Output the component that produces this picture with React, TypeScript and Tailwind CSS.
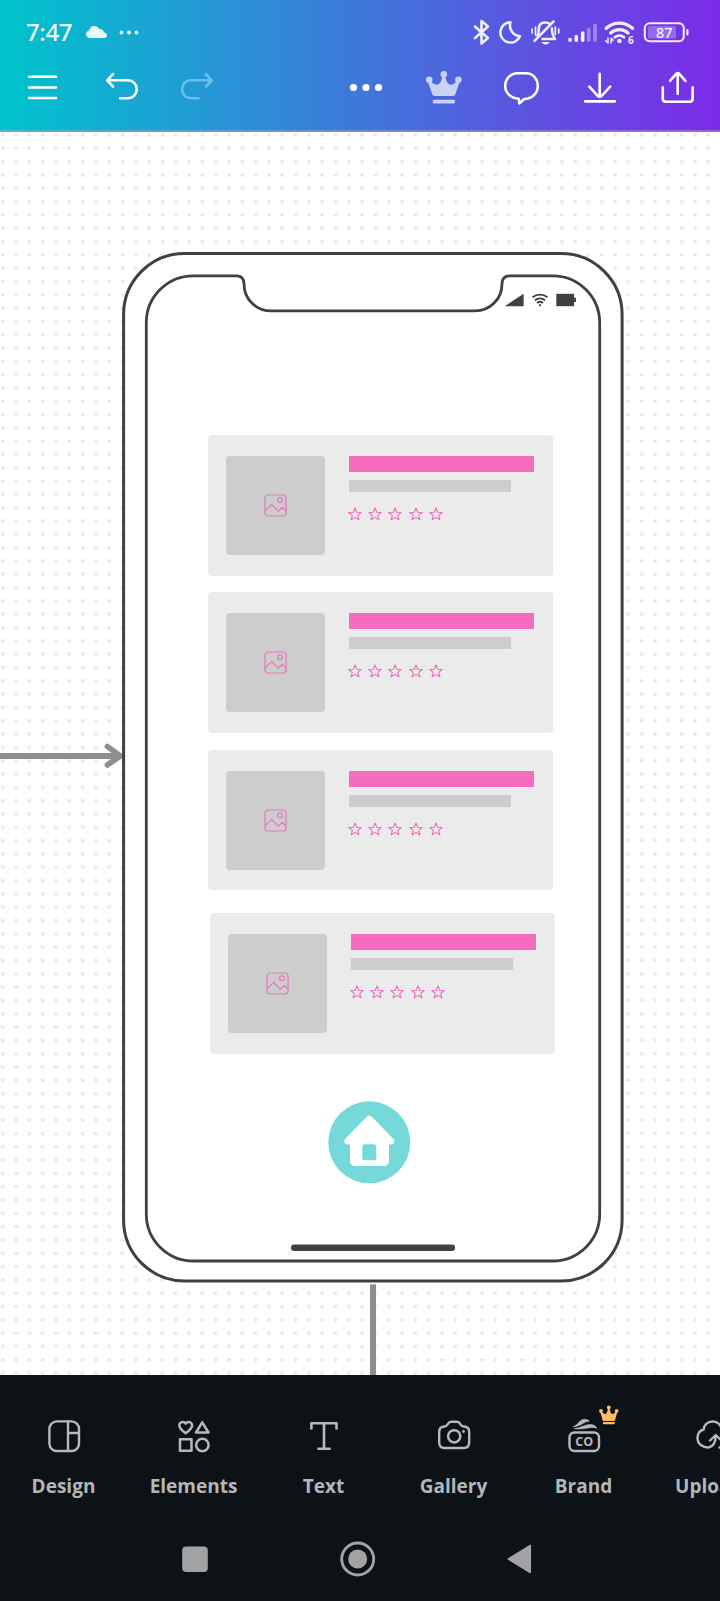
import type { ReactNode } from "react";

type IconProps = { box: string; w: number; h: number; children: ReactNode; className?: string };

/* Stroke icon whose viewBox has a scale of one unit per pixel. */
function Icon({ box, w, h, children, className = "" }: IconProps) {
  return (
    <svg
      viewBox={box}
      width={w}
      height={h}
      fill="none"
      stroke="currentColor"
      strokeLinecap="round"
      strokeLinejoin="round"
      className={"block shrink-0 overflow-visible " + className}
    >
      {children}
    </svg>
  );
}

function StatusBar() {
  return (
    <div className="flex h-[65px] items-center justify-between pb-px pl-[26px] pr-[28px] text-white/90">
      <div className="flex items-center">
        <span className="w-[48px] font-['Noto_Sans',sans-serif] text-[24px] leading-[34px] font-medium tracking-[-0.4px] text-white/95">
          7:47
        </span>
        <Icon box="84 16 56 32" w={56} h={32} className="ml-[10px]">
          <path
            d="M90.5 38C87.500 38 86 36.200 86 34.300C86 32.300 87.400 30.900 89.200 30.700C89.600 28 91.800 26 94.400 26C96.600 26 98.300 27.200 99.300 29C102 29.200 103.800 30.600 104.200 32.600C106 33 107 34.200 107 35.500C107 37 105.800 38 104.500 38Z"
            fill="currentColor"
            stroke="none"
          />
          <g fill="currentColor" stroke="none">
            <circle cx="121.500" cy="32.500" r="1.900" />
            <circle cx="129" cy="32.500" r="1.900" />
            <circle cx="136.500" cy="32.500" r="1.900" />
          </g>
        </Icon>
      </div>
      <div className="-ml-px mr-px flex items-center">
        <Icon box="472 16 22 32" w={22} h={32}>
          <path d="M476 26.500L489 38L482.500 43.500V21L489 26.500L476 38" strokeWidth="2.600" />
        </Icon>
        <Icon box="494 16 34 32" w={34} h={32}>
          <path
            d="M511.500 22.200A10.200 10.200 0 1 0 521 36.300A10.800 10.800 0 0 1 511.500 22.200Z"
            strokeWidth="2.500"
          />
        </Icon>
        <Icon box="528 16 36 32" w={36} h={32}>
          <path
            d="M538.500 35.500C539.800 33.500 539.800 31.500 539.800 29C539.800 25 542 22.500 546.300 22.500C548 22.500 549.500 22.900 550.500 23.800M553 28.500C553 32 553 35 556 39H543.500"
            strokeWidth="2.500"
          />
          <path d="M554.500 21.500L535.500 40.800" strokeWidth="2.500" />
          <path d="M542.500 42H550.500C549.500 44 548 44.600 546.500 44.600S543.500 44 542.500 42Z" fill="currentColor" stroke="none" />
          <path d="M533 29V33M536.500 27V35M556.300 27V34.500M559.700 29V33" strokeWidth="1.700" />
        </Icon>
        <Icon box="564 16 38 32" w={38} h={32}>
          <g strokeWidth="3.600">
            <path d="M571 40.200V39.500M577.300 40.200V36.500M583.700 40.200V33" />
            <path d="M589.700 40.200V29.500M596 40.200V25.500" opacity="0.400" />
          </g>
        </Icon>
        <Icon box="602 16 38 32" w={38} h={32}>
          <path d="M607.200 28.300A19.500 19.500 0 0 1 633.600 28.300" strokeWidth="3.300" />
          <path d="M611.700 33A13 13 0 0 1 629.100 33" strokeWidth="3.200" />
          <path d="M615.800 37.300A7 7 0 0 1 625 37.300" strokeWidth="2.600" />
          <circle cx="620.500" cy="41" r="2.300" fill="currentColor" stroke="none" />
          <path d="M609 38V43L606.700 40.800M612.200 43V38.200L614.200 40.300" strokeWidth="1.500" />
          <text
            x="629"
            y="44"
            fontSize="10"
            fontWeight="700"
            fontFamily="Noto Sans, sans-serif"
            fill="currentColor"
            stroke="none"
          >
            6
          </text>
        </Icon>
        <Icon box="640 16 52 32" w={52} h={32}>
          <rect x="645.800" y="23.300" width="39" height="18" rx="5" strokeWidth="2.100" />
          <rect x="649" y="26" width="28" height="12.500" rx="1.500" fill="currentColor" stroke="none" opacity="0.280" />
          <path d="M688.400 30V34.500" strokeWidth="2.200" />
          <text
            x="665.300"
            y="38"
            textAnchor="middle"
            fontSize="14.500"
            fontWeight="500"
            fontFamily="Noto Sans, sans-serif"
            fill="currentColor"
            stroke="none"
          >
            87
          </text>
        </Icon>
      </div>
    </div>
  );
}

function Toolbar() {
  return (
    <div className="flex h-[45px] justify-between pl-[22px] pr-[20px] text-white">
      <div className="flex gap-[36px]">
        <Icon box="22 65 42 45" w={42} h={45}>
          <path d="M29.200 76.700H56M29.200 87.500H56M29.200 98H56" strokeWidth="2.600" />
        </Icon>
        <Icon box="100 65 42 45" w={42} h={45}>
          <path d="M113 74.200L107.200 80.300L113 86.500M107.500 80.300H127.500C133 80.300 136.800 84.200 136.800 89.200S133 98.200 127.500 98.200H120.200" strokeWidth="2.600" />
        </Icon>
        <Icon box="178 65 42 45" w={42} h={45} className="text-[#6bbfea]">
          <path d="M206 74.200L211.800 80.300L206 86.500M211.500 80.300H191.300C185.800 80.300 182 84.200 182 89.200S185.800 98.200 191.300 98.200H198.500" strokeWidth="2.600" />
        </Icon>
      </div>
      <div className="flex gap-[34px]">
        <Icon box="344 65 44 45" w={44} h={45}>
          <g fill="currentColor" stroke="none">
            <circle cx="353.500" cy="87.500" r="3.600" />
            <circle cx="366" cy="87.500" r="3.600" />
            <circle cx="378.500" cy="87.500" r="3.600" />
          </g>
        </Icon>
        <Icon box="422 65 44 45" w={44} h={45} className="text-[#cbd2f7]">
          <g fill="currentColor" stroke="none">
            <circle cx="443.800" cy="74.300" r="3.300" />
            <circle cx="429.200" cy="79.800" r="3.300" />
            <circle cx="458.400" cy="79.800" r="3.300" />
            <path d="M442.300 76H445.300C446 80 447 83.500 449.700 84.500C452 85.200 454.500 83.500 456.500 81.500L459.500 82.500L455.500 93.800C455 95.300 454.200 96 452.800 96H434.800C433.400 96 432.600 95.300 432.100 93.800L428.100 82.500L431.100 81.500C433.100 83.500 435.600 85.200 437.900 84.500C440.600 83.500 441.600 80 442.300 76Z" />
            <rect x="432.700" y="99.700" width="22.400" height="3.800" rx="1.500" />
          </g>
        </Icon>
        <Icon box="500 65 44 45" w={44} h={45}>
          <path
            d="M517.500 73.300H526C533.500 73.300 537.800 79.500 537.800 86C537.800 93.500 531.800 98.800 524.200 99L519.300 103.500L518.800 98.800C510.500 98.300 505.200 92.500 505.200 86C505.200 79.500 510 73.300 517.500 73.300Z"
            strokeWidth="2.500"
          />
        </Icon>
        <Icon box="578 65 44 45" w={44} h={45}>
          <path d="M599.700 73.700V96.500M589.300 86.700L597.500 95.600C598.900 97.200 600.500 97.200 601.900 95.600L610.200 86.700M585.200 101.400H614.800" strokeWidth="2.600" />
        </Icon>
        <Icon box="656 65 44 45" w={44} h={45}>
          <path d="M677.700 93.700V73.200M670 80.800L676.200 73.900C677.200 72.700 678.300 72.700 679.300 73.900L685.500 80.800M662.800 87.300V98.800C662.800 100.800 663.700 101.700 665.700 101.700H689.700C691.700 101.700 692.600 100.800 692.600 98.800V87.300" strokeWidth="2.600" />
        </Icon>
      </div>
    </div>
  );
}

function Star() {
  return (
    <svg viewBox="0 0 14 14" width="14" height="14" fill="#f8eaf4" stroke="#e96cba" strokeWidth="1.100" strokeLinejoin="round">
      <path d="M7 1L8.700 5.200L13.200 5.500L9.700 8.400L10.900 12.800L7 10.400L3.100 12.800L4.300 8.400L0.800 5.500L5.300 5.200Z" />
    </svg>
  );
}

function Card({ className }: { className: string }) {
  return (
    <div className={"absolute flex h-[140.500px] w-[344.600px] rounded-[4px] bg-[#ebebeb] pt-[21px] pl-[18px] " + className}>
      <div className="flex h-[99px] w-[99px] shrink-0 items-center justify-center rounded-[4px] bg-[#cdcdcd]">
        <svg viewBox="0 0 23 23" width="23" height="23" fill="none" stroke="#e678bd" strokeWidth="1.200" strokeLinejoin="round">
          <rect x="1" y="1" width="21" height="21" rx="3" />
          <circle cx="16" cy="6.200" r="2.400" />
          <path d="M1 17L7.600 10.500L14.300 17.200L18.200 13.400L22 17" />
        </svg>
      </div>
      <div className="ml-[24px]">
        <div className="h-[16px] w-[184.500px] bg-[#f56dbe]" />
        <div className="mt-[8px] h-[12px] w-[161.500px] bg-[#cdcdcd]" />
        <div className="mt-[15px] -ml-px flex gap-[6.200px]">
          <Star />
          <Star />
          <Star />
          <Star />
          <Star />
        </div>
      </div>
    </div>
  );
}

/* Whiteboard area; its coordinates start 132px below the top of the window. */
function Canvas() {
  return (
    <main className="relative h-[1243px] overflow-hidden bg-white">
      <svg className="absolute inset-0" width="720" height="1243" viewBox="0 132 720 1243" fill="none">
        <defs>
          <pattern id="dots" x="-3.950" y="128.350" width="13.313" height="13.313" patternUnits="userSpaceOnUse">
            <circle cx="6.650" cy="6.650" r="2" fill="#e9e9eb" />
          </pattern>
        </defs>
        <rect y="132" width="720" height="1243" fill="url(#dots)" />
        <path d="M0 756H118" stroke="#8e8e8e" strokeWidth="6" />
        <path d="M107.300 746.500L120.500 756L107.300 765" stroke="#8e8e8e" strokeWidth="5.500" strokeLinecap="round" strokeLinejoin="round" />
        <path d="M373 1284.300V1375" stroke="#8e8e8e" strokeWidth="6" />
        <rect x="123.600" y="253.500" width="498.500" height="1027.500" rx="61" fill="#fff" stroke="#404040" strokeWidth="3" />
        <path
          d="M193.300 275.800H236.500C241.500 275.800 244 279 244 284C244 299 256 310.900 271 310.900H475C490 310.900 502 299 502 284C502 279 504.500 275.800 509.500 275.800H552.500A47 47 0 0 1 599.700 322.800V1214A47 47 0 0 1 552.700 1261H193.300A47 47 0 0 1 146.300 1214V322.800A47 47 0 0 1 193.300 275.800Z"
          stroke="#404040"
          strokeWidth="2.800"
        />
        <g fill="#404040">
          <path d="M504.700 306.200L523.600 293.700V306.200Z" />
          <rect x="556.300" y="293.800" width="17.800" height="12.400" />
          <rect x="574.100" y="297.700" width="1.900" height="4.300" />
          <circle cx="540" cy="305.200" r="1.100" />
        </g>
        <g stroke="#404040" strokeWidth="1.900">
          <path d="M532.600 297.300A11.500 11.500 0 0 1 547.400 297.300" />
          <path d="M534.900 300.300A8 8 0 0 1 545.100 300.300" />
          <path d="M537 303A4.800 4.800 0 0 1 543 303" />
        </g>
        <path d="M294.200 1247.800H451.800" stroke="#404040" strokeWidth="6.500" strokeLinecap="round" />
        <circle cx="369.300" cy="1142.300" r="41" fill="#75d9da" />
        <path
          d="M366.500 1117C368.300 1115.200 370.300 1115.200 372.100 1117L393 1138.500C395.500 1141.200 394 1144.500 391 1144.500H389V1160C389 1164 387 1166 383 1166H356C352 1166 350 1164 350 1160V1144.500H347.500C344.500 1144.500 343 1141.200 345.500 1138.500Z"
          fill="#fff"
        />
        <rect x="362.300" y="1144.200" width="14" height="16" rx="2.500" fill="#75d9da" />
      </svg>
      <Card className="left-[208px] top-[303px]" />
      <Card className="left-[208px] top-[460px]" />
      <Card className="left-[208px] top-[617.500px]" />
      <Card className="left-[210px] top-[781.200px]" />
    </main>
  );
}

function Tool({ label, children }: { label: string; children: ReactNode }) {
  return (
    <div className="flex w-[130px] shrink-0 flex-col items-center text-[#b7b9bd]">
      {children}
      <span className="mt-[13px] font-['Open_Sans',sans-serif] text-[19px] leading-[28px] font-bold text-[#b4b6b8]">
        {label}
      </span>
    </div>
  );
}

function BottomTools() {
  return (
    <div className="flex h-[136px] overflow-hidden pt-[24px]">
      <div className="-ml-[1.500px] flex">
        <Tool label="Design">
          <Icon box="-29 -37 58 60" w={58} h={60}>
            <rect x="-14.600" y="-14.600" width="29.600" height="29.600" rx="7.500" strokeWidth="2.400" />
            <path d="M4 -14.500V15M4 -3H15" strokeWidth="2.400" />
          </Icon>
        </Tool>
        <Tool label="Elements">
          <Icon box="-29 -37 58 60" w={58} h={60}>
            <g strokeWidth="2.500">
              <path d="M-8.300 -2.800C-12 -5.500 -14.700 -7.500 -14.700 -10.500C-14.700 -14 -10.300 -15.500 -8.300 -12.300C-6.300 -15.500 -1.900 -14 -1.900 -10.500C-1.900 -7.500 -4.600 -5.500 -8.300 -2.800Z" />
              <path d="M8.200 -13.700L14.500 -3.500H2Z" />
              <rect x="-14" y="3.300" width="11.500" height="11.500" />
              <circle cx="8.400" cy="9" r="6.200" />
            </g>
          </Icon>
        </Tool>
        <Tool label="Text">
          <Icon box="-29 -37 58 60" w={58} h={60}>
            <path d="M-12.600 -7.500V-12.700H12.500V-7.500M0 -12.700V12.800M-5.500 12.800H5.700" strokeWidth="2.600" />
          </Icon>
        </Tool>
        <Tool label="Gallery">
          <Icon box="-29 -37 58 60" w={58} h={60}>
            <path
              d="M-9.500 -9.500C-7.300 -9.500 -7.200 -10.500 -6 -12.200C-5.200 -13.600 -4.200 -14.300 -2.700 -14.300H3C4.500 -14.300 5.400 -13.600 6.200 -12.200C7.300 -10.500 7.500 -9.500 9.500 -9.500C13 -9.500 15.200 -7.800 15.200 -4V6.500C15.200 10 13 12 9.500 12H-9.200C-12.700 12 -14.800 10 -14.800 6.500V-4C-14.800 -7.800 -12.700 -9.500 -9.500 -9.500Z"
              strokeWidth="2.400"
            />
            <circle cx="0.200" cy="0.300" r="6.100" strokeWidth="2.500" />
            <circle cx="9.500" cy="-4.500" r="1.400" fill="currentColor" stroke="none" />
          </Icon>
        </Tool>
        <Tool label="Brand">
          <Icon box="-29 -37 58 60" w={58} h={60}>
            <rect x="-14.500" y="-3.500" width="29.500" height="18.500" rx="5" strokeWidth="2.400" />
            <path
              d="M-10.500 -9.200C-6 -11.500 -4 -16.500 0.500 -16.700C3 -16.800 4.800 -15.700 5.300 -14.700C0 -14.800 -3 -9.500 -10.500 -9.200Z"
              fill="currentColor"
              strokeWidth="0.600"
            />
            <path
              d="M-9.500 -7.300C-3.500 -8 1 -11.600 6.500 -11.500C9.700 -11.400 12 -9.700 12.700 -7.800C6.500 -10.300 1.500 -5.800 -9.500 -7.300Z"
              fill="currentColor"
              strokeWidth="0.600"
            />
            <text
              x="0.200"
              y="10.300"
              textAnchor="middle"
              fontSize="12.500"
              fontWeight="700"
              fontFamily="Open Sans, sans-serif"
              fill="currentColor"
              stroke="none"
            >
              CO
            </text>
            <g fill="#fdbc68" stroke="none">
              <circle cx="24.800" cy="-28.500" r="1.900" />
              <circle cx="17" cy="-25" r="1.900" />
              <circle cx="32.600" cy="-25" r="1.900" />
              <path d="M24.100 -28H25.500C26.100 -24.700 26.800 -22 28.400 -22C29.700 -22 30.900 -23 31.700 -24.500L33.200 -23.800L31.200 -16.200C31 -15.300 30.400 -14.900 29.500 -14.900H20.100C19.200 -14.900 18.600 -15.300 18.400 -16.200L16.400 -23.800L17.900 -24.500C18.700 -23 19.900 -22 21.200 -22C22.800 -22 23.500 -24.700 24.100 -28Z" />
              <rect x="18.800" y="-14" width="12" height="2.200" rx="0.800" />
            </g>
          </Icon>
        </Tool>
        <Tool label="Uploads">
          <Icon box="-29 -37 58 60" w={58} h={60}>
            <path
              d="M-5.500 11.500C-10.500 11.700 -16.500 8.500 -16.500 2C-16.500 -2.500 -14 -5.700 -10.300 -6.500C-10.300 -11 -6.500 -14.500 -1.500 -14.500C3 -14.500 6.500 -11.500 7.500 -7.500C12.500 -7 16 -3 16 2C16 7.500 12 11.500 6.500 11.500H5.500M-5.500 11.500C-2.500 11 1.500 8 1.800 -0.500M-4 4.500L1.800 -1L7.500 4.500"
              strokeWidth="2.400"
            />
          </Icon>
        </Tool>
      </div>
    </div>
  );
}

function SystemNav() {
  return (
    <div className="flex h-[90px] items-start pt-[27px] pl-[174px] text-[#a2a3a5]">
      <Icon box="174 1538 42 42" w={42} h={42}>
        <rect x="182.200" y="1546.500" width="25.600" height="25.600" rx="4" fill="currentColor" stroke="none" />
      </Icon>
      <Icon box="336 1538 42 42" w={42} h={42} className="ml-[120px]">
        <circle cx="357.700" cy="1559" r="16" strokeWidth="2.900" />
        <circle cx="357.700" cy="1559" r="9.500" fill="currentColor" stroke="none" />
      </Icon>
      <Icon box="498 1538 42 42" w={42} h={42} className="ml-[120px]">
        <path d="M508.300 1559L530.300 1545.500V1572.500Z" fill="currentColor" strokeWidth="1.500" />
      </Icon>
    </div>
  );
}

export default function App() {
  return (
    <div className="flex h-[1601px] w-[720px] flex-col overflow-hidden bg-white">
      <header className="h-[132px] border-b-2 border-[#a5a5bd]/50 bg-linear-[90deg,#00c4cc,#7d2ae8] bg-origin-border">
        <StatusBar />
        <Toolbar />
      </header>
      <Canvas />
      <footer className="h-[226px] bg-[#0d1216]">
        <BottomTools />
        <SystemNav />
      </footer>
    </div>
  );
}
